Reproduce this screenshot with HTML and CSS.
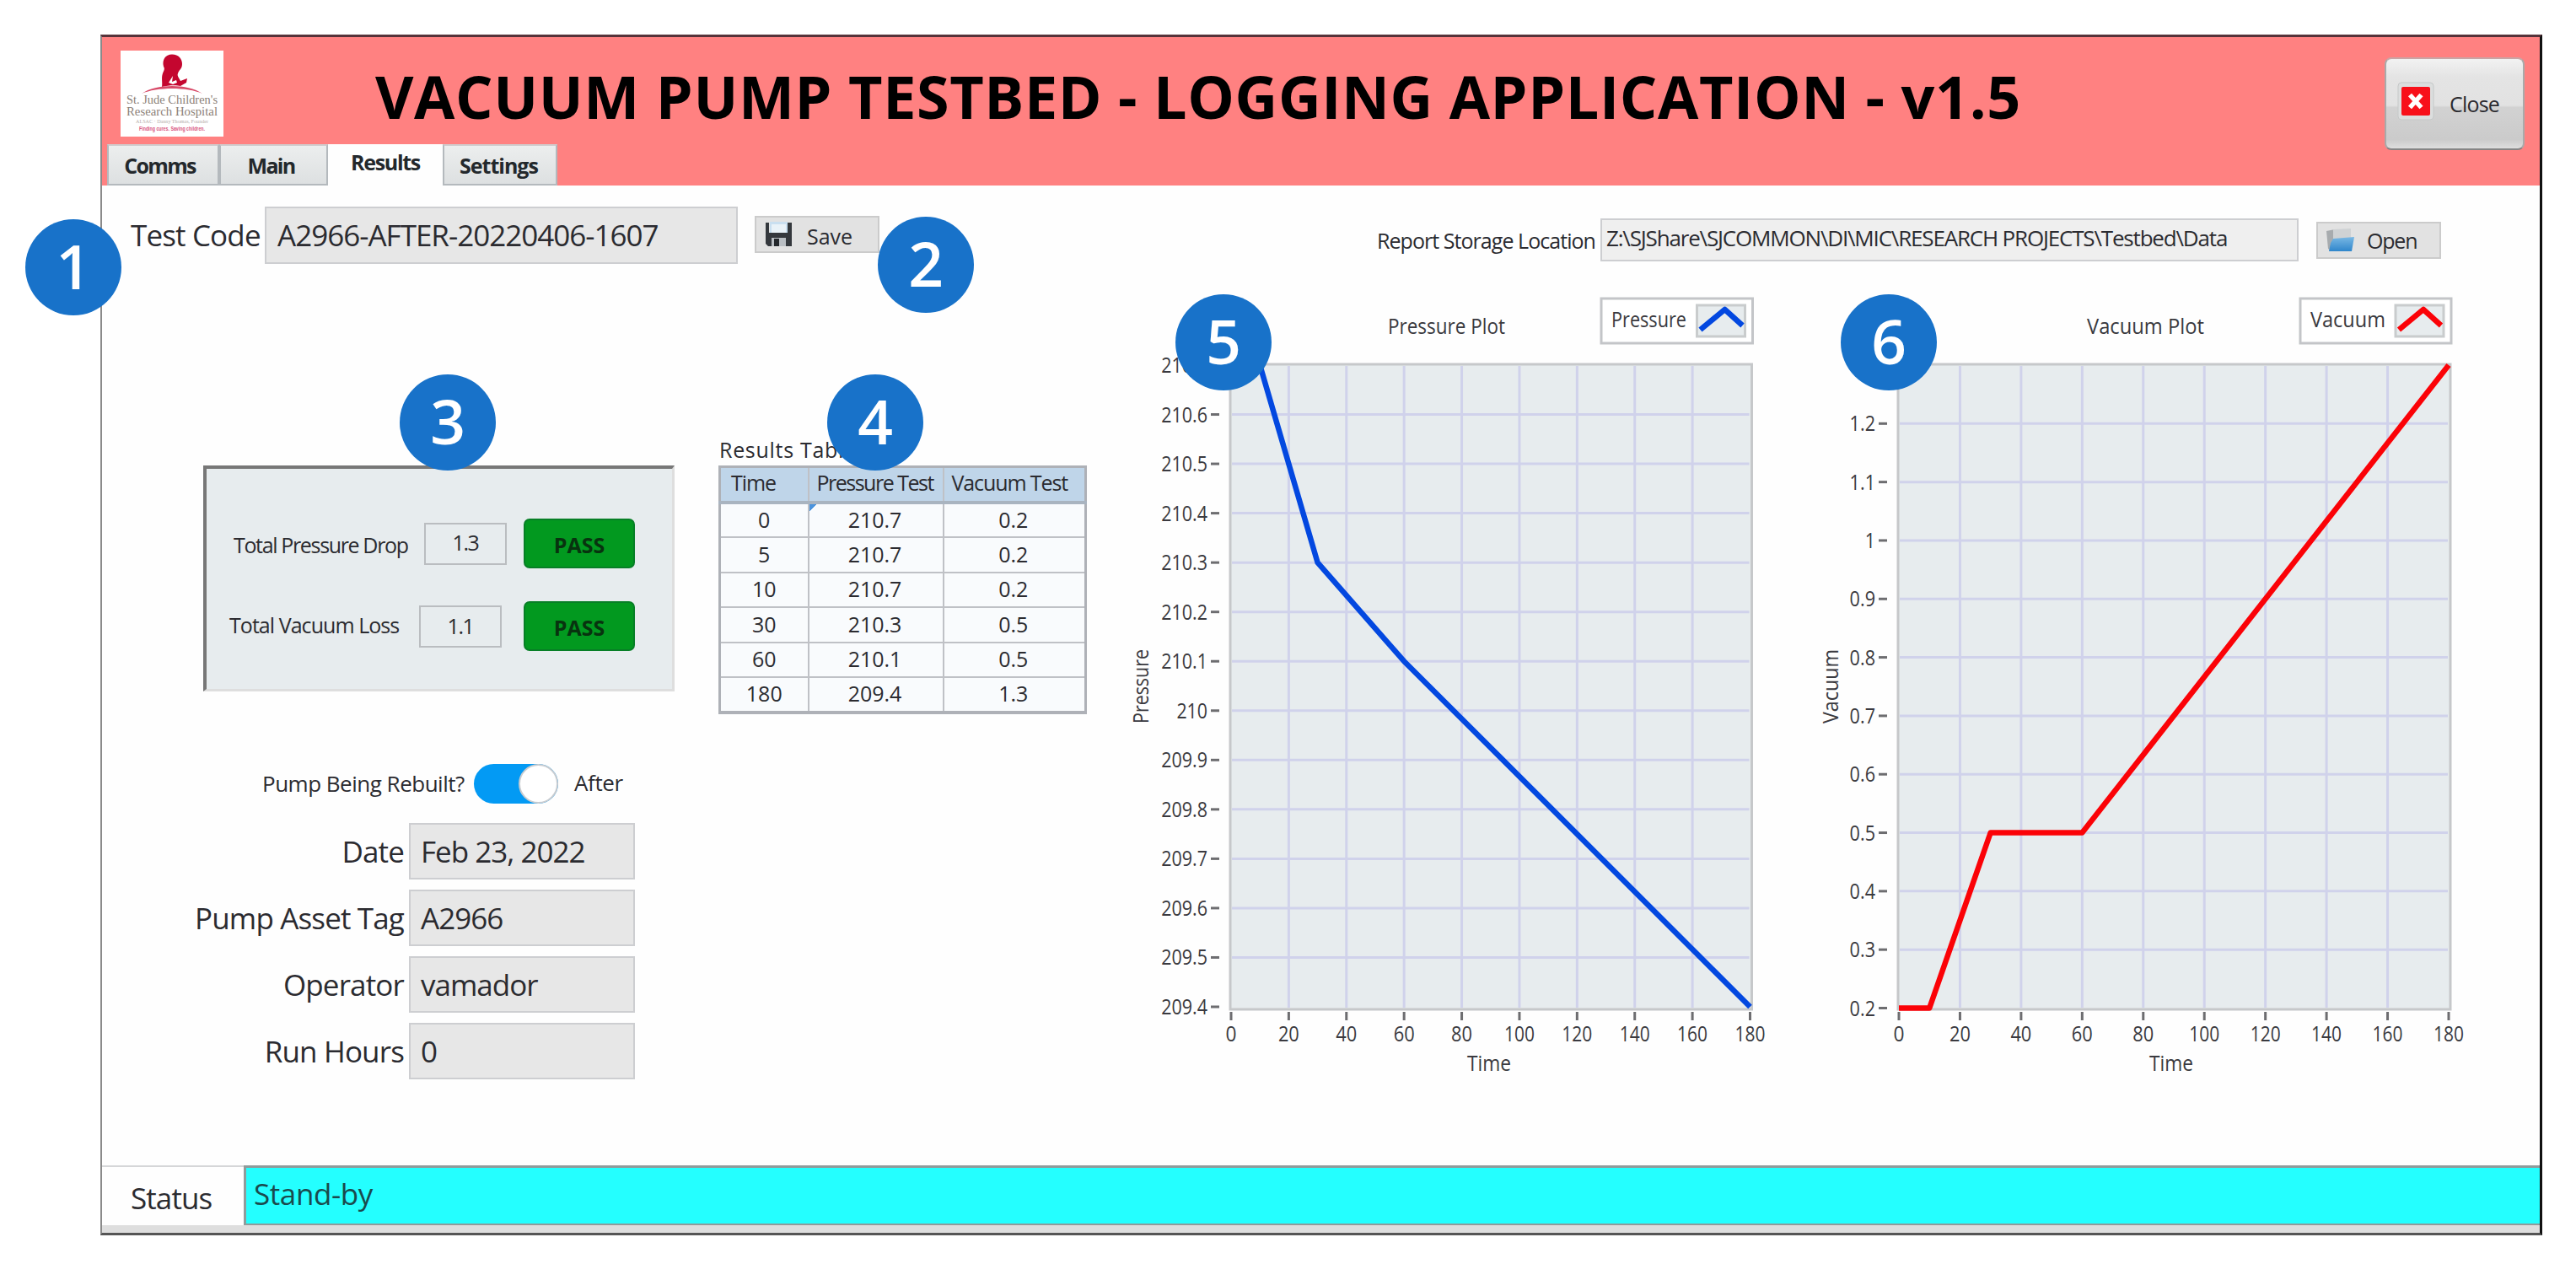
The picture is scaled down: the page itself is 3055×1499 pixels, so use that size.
FILE: index.html
```
<!DOCTYPE html>
<html lang="en">
<head>
<meta charset="utf-8">
<title>Vacuum Pump Testbed - Logging Application</title>
<link rel="stylesheet" href="styles.css">
</head>
<body>
<div class="window">
  <header class="header">
    <svg class="logo" viewBox="0 0 122 102">
      <rect width="122" height="102" fill="#fff"/>
      <path fill="#c4062f" d="M61 4.500C69 4.500 73 10 73 16C73 22 69 23 68 27C66.500 30 70 33 71 36L79 33L78 38L71 42C66 40.500 56 41 49 43C50 38 48 32 50 27C51 24 53 22 51 19C49 11 53 4.500 61 4.500Z"/>
      <path fill="#fff" d="M57 38L62 30L61 37L66 35L67 38L62 40Z"/>
      <path fill="#d84a68" d="M25 51C42 39 80 39 97 51C79 43 43 43 25 51Z"/>
      <text class="logo-name" x="7" y="62.500" textLength="108" lengthAdjust="spacingAndGlyphs">St. Jude Children's</text>
      <text class="logo-name" x="7" y="76.500" textLength="108" lengthAdjust="spacingAndGlyphs">Research Hospital</text>
      <text class="logo-founder" x="18" y="86" textLength="86" lengthAdjust="spacingAndGlyphs">ALSAC · Danny Thomas, Founder</text>
      <text class="logo-motto" x="22" y="95" textLength="78" lengthAdjust="spacingAndGlyphs">Finding cures. Saving children.</text>
    </svg>
    <h1 class="title">VACUUM PUMP TESTBED - LOGGING APPLICATION - v1.5</h1>
    <button class="close" type="button">
      <svg class="close-icon" viewBox="0 0 44 46"><rect x="1" y="1" width="42" height="44" rx="4" fill="#dcdede" stroke="#c5c8c8"/><rect x="5" y="6" width="34" height="34" rx="2" fill="#f8101a"/><path d="M15 15.500L28.500 30.500M28.500 15.500L15 30.500" stroke="#fff" stroke-width="5.500"/></svg>
      <span>Close</span>
    </button>
    <nav class="tabs">
      <span class="tab tab-comms">Comms</span>
      <span class="tab tab-main">Main</span>
      <span class="tab tab-results">Results</span>
      <span class="tab tab-settings">Settings</span>
    </nav>
  </header>

  <main class="main">
    <section class="toolbar">
      <span class="label label-code">Test Code</span>
      <span class="field code">A2966-AFTER-20220406-1607</span>
      <button class="button save" type="button">
        <svg width="31" height="30" viewBox="0 0 31 30"><path fill="#34383d" d="M0 1H4V13H26V1H31V29H3L0 26Z"/><rect x="5" y="0" width="21" height="13" fill="#c9dff0"/><rect x="7" y="3" width="17" height="10" fill="#e9f2f8"/><rect x="7" y="19" width="17" height="10" fill="#b9bec3"/><rect x="10" y="20" width="6" height="9" fill="#24282c"/></svg>
        <span>Save</span>
      </button>
      <span class="report-label">Report Storage Location</span>
      <span class="field path">Z:\SJShare\SJCOMMON\DI\MIC\RESEARCH PROJECTS\Testbed\Data</span>
      <button class="button open" type="button">
        <svg width="34" height="30" viewBox="0 0 34 30"><defs><linearGradient id="folder" x1="0" y1="0" x2="0" y2="1"><stop offset="0" stop-color="#7ab8e4"/><stop offset="1" stop-color="#2f86cb"/></linearGradient></defs><path fill="#a7abae" d="M0 4L10 2V12L5 27L2 25Z"/><path fill="#cfd2d4" d="M8 2L29 1V14H8Z"/><path fill="url(#folder)" d="M8 13L33 11L30 28H3L5 18Z"/></svg>
        <span>Open</span>
      </button>
    </section>

    <section class="body">
      <div class="left">
        <div class="results">
          <div class="panel">
            <div class="check">
              <span class="check-label">Total Pressure Drop</span>
              <span class="value">1.3</span>
              <span class="pass">PASS</span>
            </div>
            <div class="check check-loss">
              <span class="check-label">Total Vacuum Loss</span>
              <span class="value">1.1</span>
              <span class="pass">PASS</span>
            </div>
          </div>
          <table class="table">
            <caption>Results Table</caption>
            <thead><tr><th>Time</th><th>Pressure Test</th><th>Vacuum Test</th></tr></thead>
            <tbody>
              <tr><td>0</td><td class="selected">210.7</td><td>0.2</td></tr>
              <tr><td>5</td><td>210.7</td><td>0.2</td></tr>
              <tr><td>10</td><td>210.7</td><td>0.2</td></tr>
              <tr><td>30</td><td>210.3</td><td>0.5</td></tr>
              <tr><td>60</td><td>210.1</td><td>0.5</td></tr>
              <tr><td>180</td><td>209.4</td><td>1.3</td></tr>
            </tbody>
          </table>
        </div>

        <div class="rebuilt">
          <span class="rebuilt-label">Pump Being Rebuilt?</span>
          <span class="toggle"><span class="knob"></span></span>
          <span class="rebuilt-state">After</span>
        </div>

        <div class="form">
          <span class="label">Date</span><span class="field">Feb 23, 2022</span>
          <span class="label">Pump Asset Tag</span><span class="field">A2966</span>
          <span class="label">Operator</span><span class="field">vamador</span>
          <span class="label">Run Hours</span><span class="field">0</span>
        </div>
      </div>
      <svg class="chart" id="pressure-chart" width="800" height="955" viewBox="1343 345 800 955"></svg>
      <svg class="chart" id="vacuum-chart" width="869" height="955" viewBox="2143 345 869 955"></svg>
    </section>
  </main>

  <footer class="footer">
    <span class="status-label">Status</span>
    <span class="status-value">Stand-by</span>
  </footer>
</div>

<span class="badge badge-1">1</span>
<span class="badge badge-2">2</span>
<span class="badge badge-3">3</span>
<span class="badge badge-4">4</span>
<span class="badge badge-5">5</span>
<span class="badge badge-6">6</span>
<script src="charts.js"></script>
</body>
</html>
```
FILE: styles.css
```
* { box-sizing: border-box; }

body {
  margin: 0;
  width: 3055px;
  height: 1499px;
  overflow: hidden;
  position: relative;
  display: flex;
  background: #fff;
  font-family: "Open Sans", "Noto Sans", sans-serif;
  font-size: 25px;
  color: #2b2b30;
}

button { font: inherit; color: inherit; padding: 0; }

.window {
  margin: 41px 0 0 119px;
  width: 2896px;
  height: 1424px;
  display: flex;
  flex-direction: column;
  border: 3px solid #111;
  border-top-color: #56333a;
  border-left: 2px solid #8a8a8a;
  border-bottom-color: #555;
  background: #fefefe;
}

/* Header */
.header {
  flex: none;
  display: grid;
  grid-template-columns: 325px 1fr 184px;
  grid-template-rows: 127px 49px;
  background: #ff8181;
}
.logo { width: 122px; height: 102px; margin: 16px 0 0 22px; overflow: visible; }
.logo-name { font: 15px "Liberation Serif", serif; fill: #8c7f78; }
.logo-founder { font: 6px "Liberation Serif", serif; fill: #b5adaa; }
.logo-motto { font: bold 7.5px "Liberation Sans", sans-serif; fill: #d8547e; }
.title {
  margin: -2px 0 0 -1px;
  font-size: 70px;
  font-weight: 700;
  line-height: 145px;
  letter-spacing: 0.63px;
  white-space: nowrap;
  color: #000;
}
.close {
  grid-row: 1 / 3;
  grid-column: 3;
  width: 166px;
  height: 110px;
  margin-top: 24px;
  display: flex;
  align-items: center;
  padding-left: 13px;
  gap: 18px;
  border: 2px solid #999;
  border-color: #c9a5a5 #aaa #858585 #aaa;
  border-radius: 8px;
  background: linear-gradient(#f2f2f2, #e4e4e4 20%, #e2e2e2 52%, #d2d2d2 54%, #cbcbcb 90%, #dedede);
  letter-spacing: -0.8px;
}
.close-icon { width: 44px; height: 46px; margin-top: -6px; }
.tabs { grid-row: 2; grid-column: 1 / 3; display: flex; padding-left: 6px; }
.tab {
  height: 49px;
  line-height: 47px;
  border: 2px solid #b4b9bd;
  border-top-color: #d0cccd;
  background: linear-gradient(#eceeee, #dde0e1);
  font-size: 25px;
  font-weight: 700;
  letter-spacing: -1.7px;
  text-align: center;
  color: #23282c;
}
.tab-comms { width: 133px; padding-right: 8px; }
.tab-main { width: 129px; padding-right: 6px; }
.tab-results { width: 136px; border: 0; background: #fefefe; line-height: 42px; letter-spacing: -1.3px; }
.tab-settings { width: 136px; padding-right: 3px; letter-spacing: -1px; }

/* Top row */
.main { flex: 1; display: flex; flex-direction: column; }
.toolbar { height: 125px; padding: 25px 0 0 34px; display: flex; align-items: flex-start; }
.label { font-size: 35px; letter-spacing: -0.85px; line-height: 67px; text-align: right; white-space: nowrap; }
.label-code { width: 159px; line-height: 68px; text-align: left; }
.field {
  height: 67px;
  line-height: 64px;
  padding-left: 12px;
  border: 2px solid #cdced1;
  background: #e7e7e7;
  font-size: 35px;
  letter-spacing: -1px;
  white-space: nowrap;
}
.code { width: 561px; height: 68px; padding-left: 13px; }
.button {
  display: flex;
  align-items: center;
  border: 2px solid #cbcbcb;
  border-radius: 0;
  background: #e2e2e2;
}
.save { width: 148px; height: 44px; margin: 11px 0 0 20px; padding-left: 11px; gap: 18px; }
.save span { padding-top: 4px; }
.report-label { width: 265px; margin-left: 590px; line-height: 80px; letter-spacing: -0.95px; white-space: nowrap; }
.path {
  width: 828px;
  height: 51px;
  margin-top: 14px;
  padding-left: 5px;
  line-height: 42px;
  background: #efefef;
  font-size: 26px;
  letter-spacing: -1.18px;
}
.open { width: 148px; height: 44px; margin: 18px 0 0 21px; padding-left: 10px; gap: 14px; letter-spacing: -1.2px; }

/* Results area */
.body { display: flex; }
.left { width: 1222px; }
.results { display: flex; align-items: flex-start; }
.panel {
  width: 559px;
  height: 268px;
  margin: 207px 0 0 120px;
  padding-top: 59px;
  border: 3px solid #dedede;
  border-top: 4px solid #777;
  border-left: 4px solid #777;
  background: #e7ecee;
}
.check { height: 59px; display: flex; align-items: center; padding-left: 32px; letter-spacing: -1.35px; }
.check-loss { margin-top: 39px; padding-left: 27px; }
.check-label { width: 226px; white-space: nowrap; padding-top: 3px; }
.check-loss .check-label { width: 225px; padding: 0 0 3px; letter-spacing: -0.95px; }
.value { width: 98px; height: 50px; line-height: 43px; border: 2px solid #babdc0; text-align: center; }
.check-loss .value { line-height: 45px; }
.pass {
  width: 132px;
  height: 59px;
  margin-left: 20px;
  line-height: 59px;
  border: 2px solid #077f26;
  border-radius: 7px;
  background: #02991f;
  font-weight: 700;
  letter-spacing: 0;
  text-align: center;
  color: #08330f;
}
.check-loss .pass { margin-left: 26px; }

.table {
  width: 437px;
  height: 293px;
  margin: 169px 0 0 52px;
  border: 3px solid #aeb1b7;
  border-bottom-width: 4px;
  border-collapse: collapse;
  table-layout: fixed;
  background: #f9fbfd;
}
.table caption { height: 38px; line-height: 38px; padding-left: 1px; letter-spacing: 0.7px; text-align: left; }
.table thead tr { height: 42px; background: #bfd5e9; }
.table tbody tr { height: 41.500px; }
.table th, .table td { padding: 0 0 2px; border: 2px solid #bfc1c6; text-align: center; line-height: 30px; }
.table th { padding: 0 0 4px 9px; border-bottom: 4px solid #a9b4c0; font-weight: 400; letter-spacing: -1.5px; text-align: left; white-space: nowrap; }
.table th:first-child { width: 105px; padding-left: 12px; letter-spacing: -1.1px; }
.table th:nth-child(2) { width: 160px; }
.table th:nth-child(3) { letter-spacing: -1.1px; }
.table td:nth-child(2), .table td:nth-child(3) { padding-right: 2px; }
.table .selected { background: linear-gradient(135deg, #4b93dd 6px, transparent 6px); }

/* Pump details */
.rebuilt { height: 47px; margin-top: 59px; padding-left: 190px; display: flex; align-items: center; }
.rebuilt-label { width: 251px; font-size: 26px; letter-spacing: -0.5px; white-space: nowrap; }
.toggle { width: 100px; height: 47px; display: flex; justify-content: flex-end; border-radius: 24px; background: #039af4; }
.knob { width: 47px; height: 47px; border: 2px solid #c9ccd0; border-radius: 50%; background: #fff; }
.rebuilt-state { margin-left: 19px; font-size: 26px; line-height: 40px; letter-spacing: -0.4px; padding-bottom: 3px; }
.form {
  display: grid;
  grid-template-columns: 358px 268px;
  grid-auto-rows: 67px;
  column-gap: 6px;
  row-gap: 12px;
  margin-top: 23px;
}

/* Charts */
.chart { flex: none; display: block; overflow: visible; }
.chart text { font-size: 25px; fill: #3a3a40; }
.plot { fill: #e7ecee; stroke: #c6c8ca; stroke-width: 3; }
.grid { stroke: #d0d2eb; stroke-width: 3; }
.tick { stroke: #6d6d70; stroke-width: 3; }
.series { fill: none; stroke-width: 6.5; stroke-linejoin: round; }
.legend { fill: #fff; stroke: #c3c5c8; stroke-width: 3; }
.swatch { fill: #e7ecee; stroke: #c9cccd; stroke-width: 3; }

/* Status bar */
.footer { flex: none; height: 80px; display: flex; border-bottom: 9px solid #dedede; font-size: 35px; }
.status-label { width: 168px; padding-left: 34px; border-top: 2px solid #d5d6d8; line-height: 74px; letter-spacing: -0.9px; }
.status-value { flex: 1; padding-left: 9px; border: 3px solid #8f9b9b; border-right: 0; border-bottom-width: 2px; background: #24ffff; line-height: 62px; letter-spacing: -0.4px; color: #1a4a4d; }

/* Callouts lying over the window */
.badge {
  position: absolute;
  width: 114px;
  height: 114px;
  border-radius: 50%;
  background: #1872c9;
  font-size: 73px;
  font-weight: 600;
  line-height: 109px;
  text-align: center;
  color: #fff;
}
.badge-1 { left: 30px; top: 260px; }
.badge-2 { left: 1041px; top: 257px; }
.badge-3 { left: 474px; top: 444px; }
.badge-4 { left: 981px; top: 444px; }
.badge-5 { left: 1394px; top: 349px; }
.badge-6 { left: 2183px; top: 349px; }
```
FILE: charts.js
```
const NS = "http://www.w3.org/2000/svg";

function add(svg, name, attrs, text) {
  const el = document.createElementNS(NS, name);
  for (const key in attrs) el.setAttribute(key, attrs[key]);
  if (text !== undefined) el.textContent = text;
  svg.appendChild(el);
}

function label(svg, text, x, y, width, anchor, extra) {
  add(svg, "text", Object.assign({ x, y, textLength: width, lengthAdjust: "spacingAndGlyphs", "text-anchor": anchor }, extra), text);
}

function drawChart(id, c) {
  const svg = document.getElementById(id);
  const px = t => c.x0 + (c.x1 - c.x0) * t / 180;
  const py = v => c.bottom - (c.bottom - 433) * (v - c.min) / (c.max - c.min);
  add(svg, "rect", { class: "plot", x: c.x0 - 1, y: 432, width: c.x1 - c.x0 + 3, height: 765 });
  for (let t = 0; t <= 180; t += 20) {
    const x = px(t);
    if (t > 0 && t < 180) add(svg, "line", { class: "grid", x1: x, x2: x, y1: 434, y2: 1195 });
    add(svg, "line", { class: "tick", x1: x, x2: x, y1: 1200, y2: 1210 });
    label(svg, t, x, 1235, [13, 25, 36][String(t).length - 1], "middle");
  }
  const steps = Math.round((c.max - c.min) * 10);
  for (let i = 0; i <= steps; i++) {
    const v = Math.round((c.min + i / 10) * 10) / 10;
    const y = py(v);
    if (i > 0 && i < steps) add(svg, "line", { class: "grid", x1: c.x0 + 1, x2: c.x1 - 1, y1: y, y2: y });
    if (i < steps || c.topLabel) {
      add(svg, "line", { class: "tick", x1: c.x0 - 24, x2: c.x0 - 14, y1: y, y2: y });
      const s = String(v);
      label(svg, s, c.x0 - 28, y + 9, s.includes(".") ? (s.length - 1) * 12.2 + 6 : s.length * 12.2, "end");
    }
  }
  add(svg, "polyline", { class: "series", stroke: c.color, points: c.data.map(([t, v]) => px(t) + "," + py(v)).join(" ") });
  label(svg, c.name + " Plot", c.titleX, 396, 139, "start");
  label(svg, "Time", c.timeX, 1270, 52, "middle");
  label(svg, c.name, 0, 0, 88, "start", { transform: `translate(${c.nameX} 858) rotate(-90)` });
  const r = c.x1 + 3;
  add(svg, "rect", { class: "legend", x: c.legendX, y: 354, width: r - c.legendX, height: 53 });
  label(svg, c.name, c.legendX + 12, 388, 89, "start");
  add(svg, "rect", { class: "swatch", x: r - 66, y: 362, width: 57, height: 37 });
  add(svg, "polyline", { class: "series", stroke: c.color, points: `${r - 62},391 ${r - 33},367 ${r - 12},386` });
}

drawChart("pressure-chart", {
  name: "Pressure", color: "#0348e0", x0: 1460, x1: 2075.5, bottom: 1194, min: 209.4, max: 210.7, topLabel: true,
  titleX: 1646, timeX: 1766, legendX: 1899, nameX: 1362,
  data: [[0, 210.7], [10, 210.7], [30, 210.3], [60, 210.1], [180, 209.4]]
});
drawChart("vacuum-chart", {
  name: "Vacuum", color: "#fb0207", x0: 2252, x1: 2904, bottom: 1195.5, min: 0.2, max: 1.3, topLabel: false,
  titleX: 2475, timeX: 2575, legendX: 2728, nameX: 2180,
  data: [[0, 0.2], [10, 0.2], [30, 0.5], [60, 0.5], [180, 1.3]]
});
```
